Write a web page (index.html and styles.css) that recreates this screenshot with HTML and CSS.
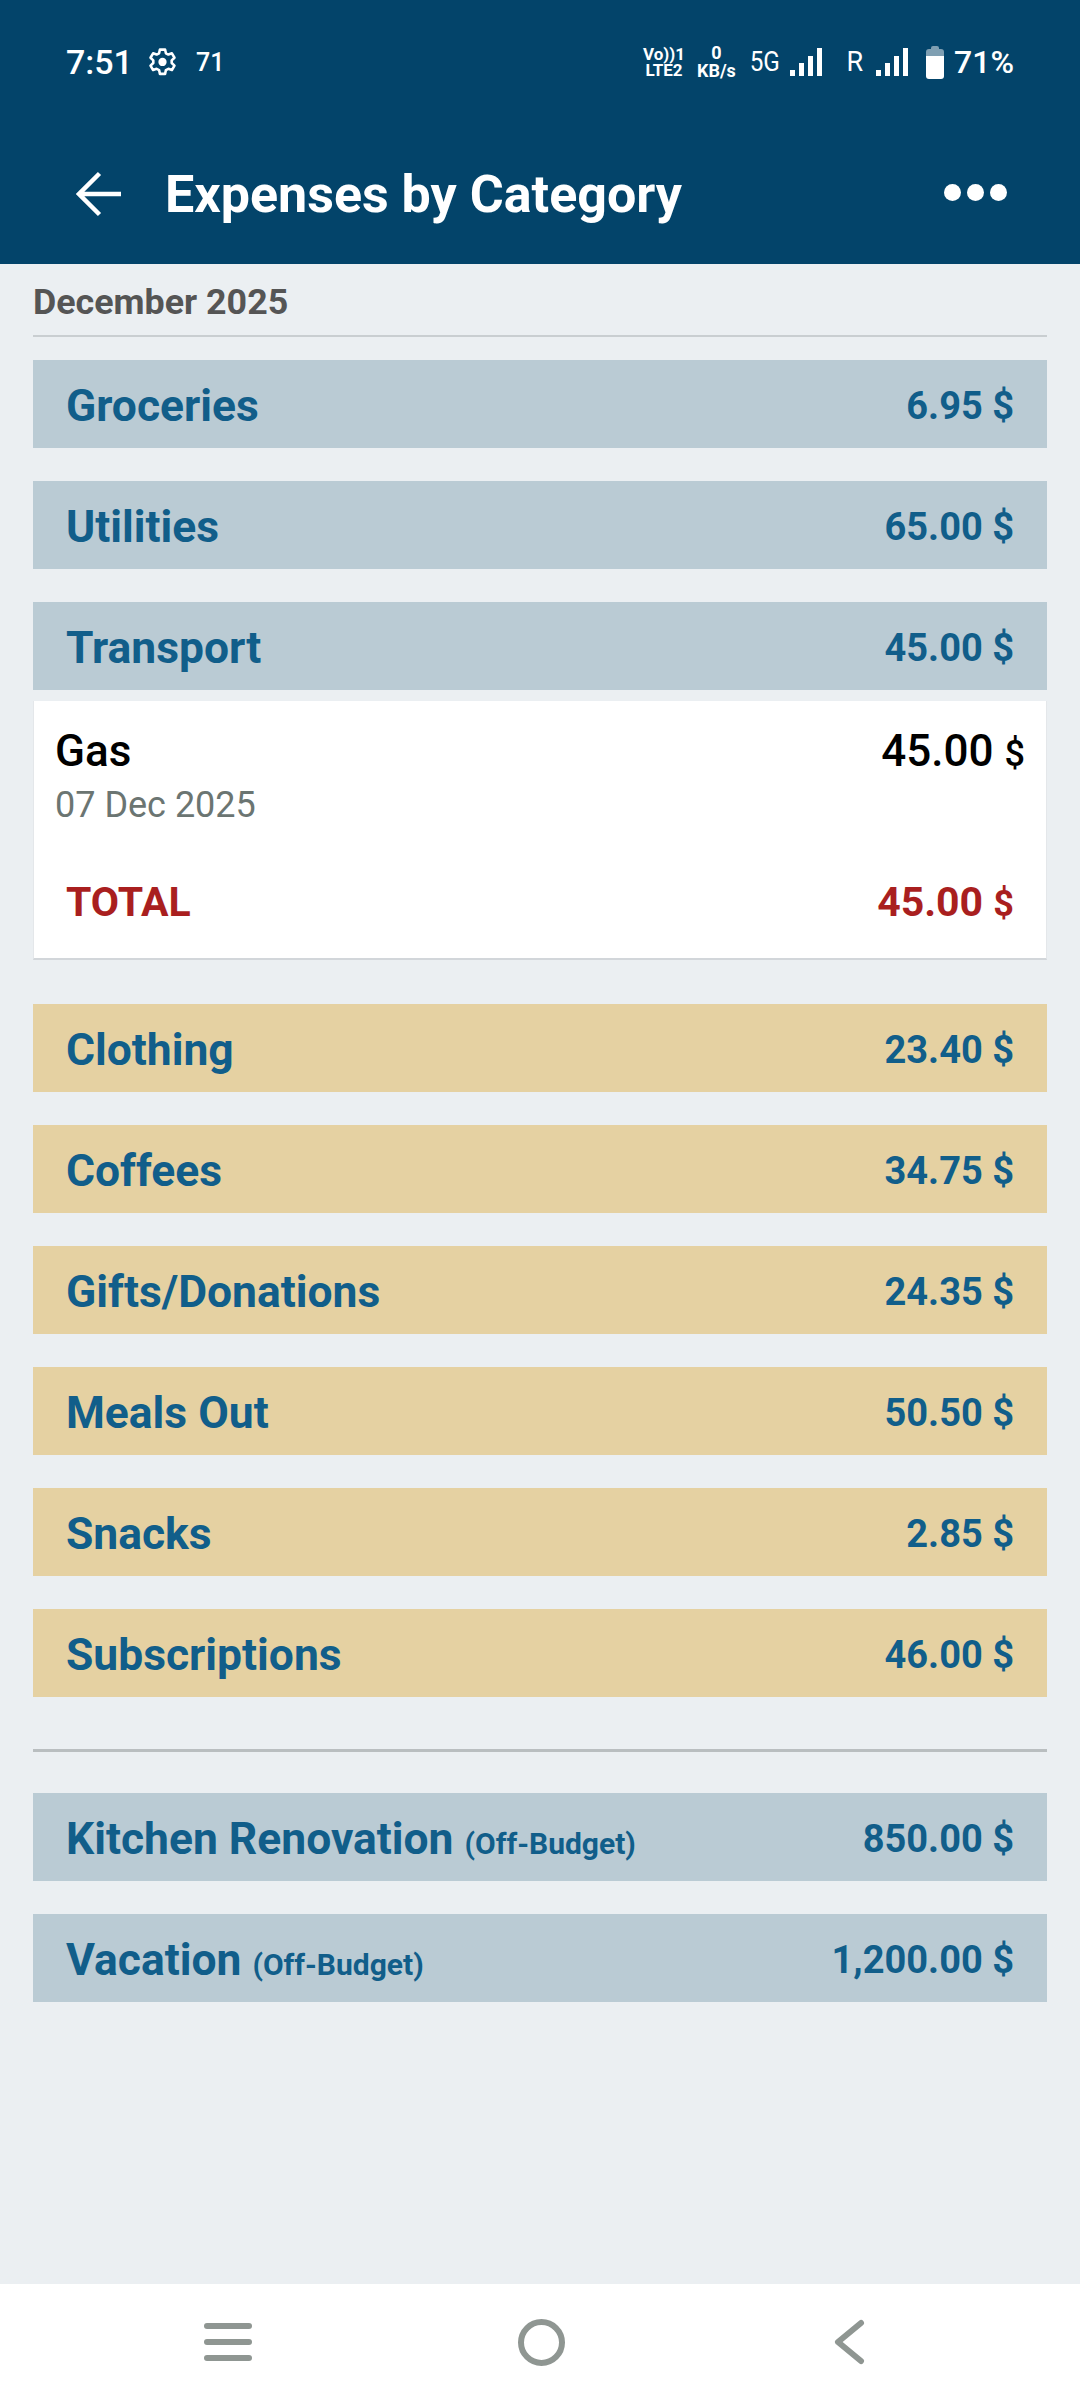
FILE: index.html
```html
<!DOCTYPE html>
<html>

<head>
    <meta charset="utf-8">
    <title>Expenses by Category</title>
    <link rel="stylesheet" href="styles.css">
</head>

<body>
    <header class="top">
        <div class="status">
            <div class="status-left">
                <span class="time">7:51</span>
                <svg class="gear" width="31" height="31" viewBox="0 0 30 30">
                    <path d="M12.500 2.500h5l.8 3.600 2.400 1.200 3.400-1.200 2.500 4.300-2.700 2.500v2.600l2.700 2.500-2.500 4.300-3.400-1.200-2.400 1.200-.8 3.700h-5l-.8-3.700-2.400-1.200-3.400 1.200-2.500-4.300 2.700-2.500v-2.600L3.400 10.400l2.500-4.300 3.400 1.200 2.400-1.200z" />
                    <circle class="gear-dot" cx="15" cy="14.500" r="4" />
                </svg>
                <span class="notif">71</span>
            </div>
            <div class="status-right">
                <span class="volte"><span class="volte-top">Vo))1</span><span>LTE2</span></span>
                <span class="speed"><span>0</span><span>KB/s</span></span>
                <span class="net net-5g">5G</span>
                <svg class="bars" width="32" height="28" viewBox="0 0 32 28">
                    <rect x="0" y="22" width="5" height="6" />
                    <rect x="9" y="15" width="5" height="13" />
                    <rect x="18" y="8" width="5" height="20" />
                    <rect x="27" y="0" width="5" height="28" />
                </svg>
                <span class="net net-r">R</span>
                <svg class="bars" width="32" height="28" viewBox="0 0 32 28">
                    <rect x="0" y="22" width="5" height="6" />
                    <rect x="9" y="15" width="5" height="13" />
                    <rect x="18" y="8" width="5" height="20" />
                    <rect x="27" y="0" width="5" height="28" />
                </svg>
                <svg class="battery" width="18" height="33" viewBox="0 0 18 33">
                    <path fill="#7f9fb2" d="M5 2q0-2 2-2h4q2 0 2 2v1h2q3 0 3 3v5H0V6q0-3 3-3h2z" />
                    <path fill="#fff" d="M0 10h18v20q0 3-3 3H3q-3 0-3-3z" />
                </svg>
                <span class="battery-pct">71%</span>
            </div>
        </div>
        <div class="appbar">
            <svg class="back" width="46" height="46" viewBox="0 0 46 46">
                <path d="M3 23h42M23.500 2.500 3 23l20.500 20.500" />
            </svg>
            <h1>Expenses by Category</h1>
            <div class="dots"><i></i><i></i><i></i></div>
        </div>
    </header>

    <main class="content">
        <div class="month">December 2025</div>

        <div class="row blue first"><span class="name">Groceries</span><span>6.95 $</span></div>
        <div class="row blue"><span class="name">Utilities</span><span>65.00 $</span></div>
        <div class="row blue"><span class="name">Transport</span><span>45.00 $</span></div>

        <div class="detail">
            <div class="item">
                <span class="item-name">Gas</span>
                <span class="item-amount">45.00 <small>$</small></span>
            </div>
            <div class="item-date">07 Dec 2025</div>
            <div class="total">
                <span>TOTAL</span>
                <span>45.00 <small>$</small></span>
            </div>
        </div>

        <div class="row tan after-detail"><span class="name">Clothing</span><span>23.40 $</span></div>
        <div class="row tan"><span class="name">Coffees</span><span>34.75 $</span></div>
        <div class="row tan"><span class="name">Gifts/Donations</span><span>24.35 $</span></div>
        <div class="row tan"><span class="name">Meals Out</span><span>50.50 $</span></div>
        <div class="row tan"><span class="name">Snacks</span><span>2.85 $</span></div>
        <div class="row tan"><span class="name">Subscriptions</span><span>46.00 $</span></div>

        <hr class="split">

        <div class="row blue"><span class="name">Kitchen Renovation <small>(Off-Budget)</small></span><span>850.00 $</span></div>
        <div class="row blue"><span class="name">Vacation <small>(Off-Budget)</small></span><span>1,200.00 $</span></div>
    </main>

    <nav class="navbar">
        <svg width="48" height="38" viewBox="0 0 48 38">
            <rect x="0" y="0" width="48" height="6" rx="3" />
            <rect x="0" y="16" width="48" height="6" rx="3" />
            <rect x="0" y="32" width="48" height="6" rx="3" />
        </svg>
        <svg class="home" width="47" height="47" viewBox="0 0 47 47">
            <circle class="nav-line" cx="23.500" cy="23.500" r="20.500" />
        </svg>
        <svg width="30" height="44" viewBox="0 0 30 44">
            <path class="nav-line" d="M27 3 4 22l23 19" />
        </svg>
    </nav>
</body>

</html>
```

FILE: styles.css
```css
html,
body {
    margin: 0;
    padding: 0;
}

body {
    width: 1080px;
    height: 2400px;
    display: flex;
    flex-direction: column;
    background: #ebeff2;
    font-family: Roboto, "Noto Sans", sans-serif;
    overflow: hidden;
}

/* header */
.top {
    height: 264px;
    background: #03446a;
    color: #fff;
    flex-shrink: 0;
}

.status {
    height: 124px;
    padding: 0 66px;
    display: flex;
    justify-content: space-between;
    align-items: center;
}

.status-left,
.status-right {
    display: flex;
    align-items: center;
}

.time {
    font-size: 34px;
    font-weight: 500;
}

.gear {
    margin-left: 14px;
}

.gear path {
    fill: none;
    stroke: #fff;
    stroke-width: 2.500;
    stroke-linejoin: round;
}

.gear-dot {
    fill: #fff;
}

.notif {
    margin-left: 18px;
    font-size: 25px;
    font-weight: 500;
}

.volte,
.speed {
    display: flex;
    flex-direction: column;
    align-items: center;
    font-weight: 700;
    line-height: 16px;
}

.volte {
    font-size: 17px;
}

.speed {
    margin-left: 12px;
    font-size: 18px;
    line-height: 18px;
}

.net {
    font-size: 27px;
    font-weight: 400;
}

.net-5g {
    margin-left: 12px;
    transform: scaleX(0.9);
}

.bars {
    margin-left: 9px;
    fill: #fff;
}

.net-r {
    margin-left: 24px;
}

.status-right .net-r + .bars {
    margin-left: 13px;
}

.battery {
    margin-left: 18px;
}

.battery-pct {
    margin-left: 10px;
    font-size: 32px;
    font-weight: 500;
}

.appbar {
    height: 140px;
    display: flex;
    align-items: center;
    padding: 0 73px 0 76px;
    box-sizing: border-box;
}

.back path {
    fill: none;
    stroke: #fff;
    stroke-width: 4.500;
}

.appbar h1 {
    flex: 1;
    margin: 0 0 0 43px;
    font-size: 52px;
    font-weight: 700;
}

.dots {
    display: flex;
    gap: 6px;
    margin-top: -3px;
}

.dots i {
    width: 17px;
    height: 17px;
    border-radius: 50%;
    background: #fff;
}

/* list */
.content {
    flex: 1;
    padding: 0 33px;
}

.month {
    height: 71px;
    line-height: 76px;
    font-size: 35.800px;
    font-weight: 700;
    color: #555;
    border-bottom: 2px solid #c9ced1;
}

.row {
    height: 85px;
    margin-top: 33px;
    padding: 3px 33px 0;
    display: flex;
    justify-content: space-between;
    align-items: center;
    font-size: 38px;
    font-weight: 700;
    color: #115e8a;
}

.name {
    font-size: 44.400px;
}

.row small {
    font-size: 30px;
    font-weight: 700;
}

.first {
    margin-top: 23px;
}

.blue {
    background: #bacbd4;
}

.tan {
    background: #e5d1a2;
}

.after-detail {
    margin-top: 44px;
}

.detail {
    margin-top: 11px;
    height: 259px;
    box-sizing: border-box;
    padding: 24px 21px 0;
    background: #fff;
    border: 1px solid #e4e7ea;
    border-top: 0;
    border-bottom: 2px solid #d2d6da;
}

.item {
    display: flex;
    justify-content: space-between;
    font-size: 44px;
    font-weight: 500;
    color: #000;
}

.item small {
    font-size: 36px;
}

.item-date {
    margin-top: 7px;
    font-size: 36px;
    color: #6b7572;
}

.total {
    margin-top: 52px;
    padding: 0 11px;
    display: flex;
    justify-content: space-between;
    font-size: 41px;
    font-weight: 700;
    color: #a91f1f;
}

.total small {
    font-size: 36px;
}

.split {
    margin: 52px 0 0;
    height: 3px;
    border: 0;
    background: #b9bec0;
}

.split + .row {
    margin-top: 41px;
}

/* bottom nav */
.navbar {
    height: 116px;
    flex-shrink: 0;
    background: #fff;
    display: flex;
    justify-content: space-between;
    align-items: center;
    padding: 0 216px 0 204px;
}

.navbar svg {
    fill: #8f9692;
    overflow: visible;
}

.home {
    margin-right: 4px;
}

.nav-line {
    fill: none;
    stroke: #8f9692;
    stroke-width: 6;
    stroke-linecap: round;
    stroke-linejoin: round;
}
```
